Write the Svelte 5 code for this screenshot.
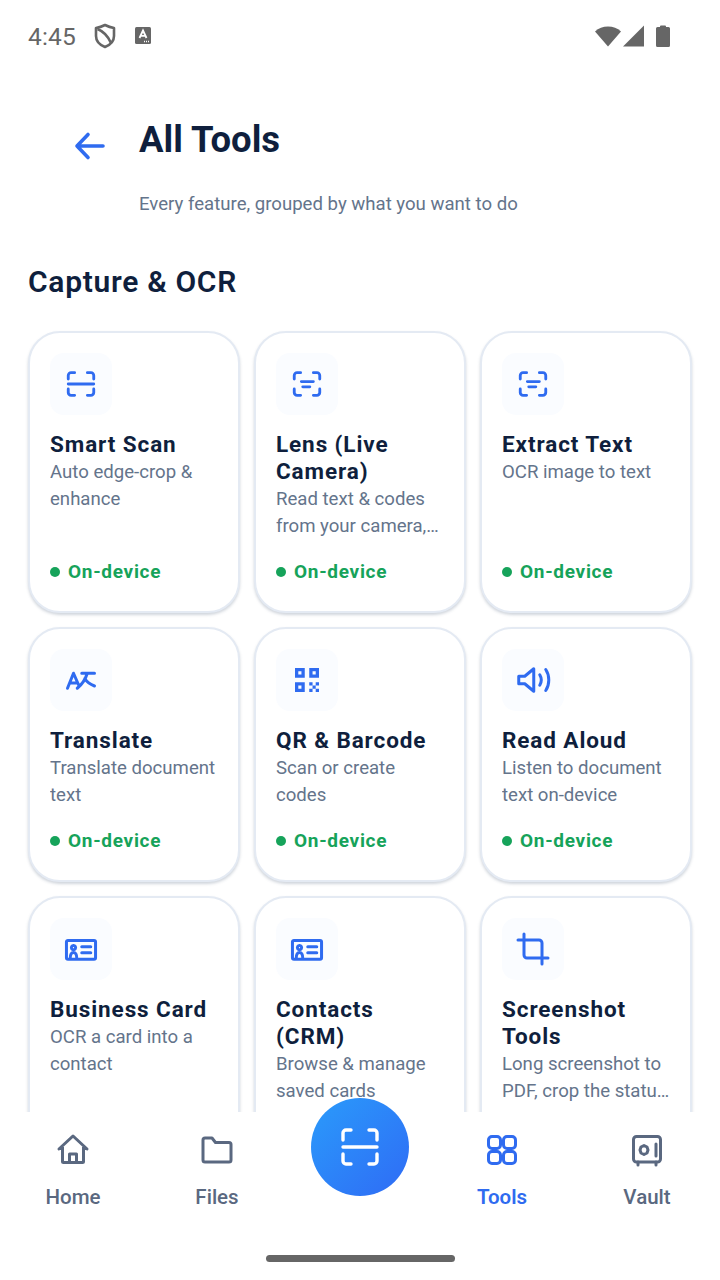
<script>
  const scanCorners = 'M3 8.500V6a2 2 0 0 1 2-2h2.500M16.500 4H19a2 2 0 0 1 2 2v2.500M21 15.500V18a2 2 0 0 1-2 2h-2.500M7.500 20H5a2 2 0 0 1-2-2v-2.500';

  const icons = {
    scan: scanCorners + 'M3 12h18',
    lens: scanCorners + 'M8 10.300h8.500M9 14h5',
    translate: 'M3 17.500 7 7.500l3.500 8M4.700 14h5M12.500 7.500H21M16 8c-1 3.500-3.500 7-6.500 9.500M14.500 11c1.500 2.500 3.800 4 6.500 5',
    card: 'M3.300 6.300h17.400a1 1 0 0 1 1 1v10.500a1 1 0 0 1-1 1H3.300a1 1 0 0 1-1-1V7.300a1 1 0 0 1 1-1zM12.500 10.500h6M12.500 14.500h6M4.800 18.500c0-5.500 4.400-5.500 4.400 0M7 9.700a1.400 1.400 0 1 0 .01 0',
    crop: 'M6 2v14a2 2 0 0 0 2 2h14M2 6h14a2 2 0 0 1 2 2v14'
  };

  const tools = [
    { name: 'Smart Scan', desc: 'Auto edge-crop & enhance', icon: 'scan' },
    { name: 'Lens (Live Camera)', desc: 'Read text & codes from your camera, instantly', icon: 'lens' },
    { name: 'Extract Text', desc: 'OCR image to text', icon: 'lens' },
    { name: 'Translate', desc: 'Translate document text', icon: 'translate' },
    { name: 'QR & Barcode', desc: 'Scan or create codes', icon: 'qr' },
    { name: 'Read Aloud', desc: 'Listen to document text on-device', icon: 'speaker' },
    { name: 'Business Card', desc: 'OCR a card into a contact', icon: 'card' },
    { name: 'Contacts (CRM)', desc: 'Browse & manage saved cards', icon: 'card' },
    { name: 'Screenshot Tools', desc: 'Long screenshot to PDF, crop the status bar', icon: 'crop' }
  ];

  const iconSize = (icon) => (icon === 'scan' || icon === 'lens' ? 34 : 36);
</script>

<div class="screen">
  <div class="status">
    <span class="time">4:45</span>
    <svg class="st-shield" width="24" height="26" viewBox="0 0 24 26" fill="none" stroke="#666" stroke-width="2.600" stroke-linejoin="round">
      <path d="M12 2c3 1.500 6 2.500 9 3v8c0 5-4 9-9 11-5-2-9-6-9-11V5c3-.5 6-1.500 9-3z" />
      <path d="M4.500 6c5 2 10.500 7 13.500 14" />
    </svg>
    <svg class="st-a" width="16" height="18" viewBox="0 0 16 18">
      <rect width="16" height="17" rx="1.500" fill="#666" />
      <path d="M4.500 11 8 3.500l3.500 7.500M5.800 8.800h4.400" fill="none" stroke="#fff" stroke-width="1.800" />
      <path d="M9 14.500h5" stroke="#fff" stroke-width="1.500" stroke-dasharray="1 1" />
    </svg>
    <span class="spacer"></span>
    <svg width="26" height="22" viewBox="0 0 26 22"><path d="M0 6.500C3.500 3 8 1.500 13 1.500S22.500 3 26 6.500L13 21.500z" fill="#666" /></svg>
    <svg class="st-signal" width="21" height="22" viewBox="0 0 21 22"><path d="M21 0.500V21.500H0z" fill="#666" /></svg>
    <svg class="st-batt" width="14" height="22" viewBox="0 0 14 22"><path d="M4 1.500a1 1 0 0 1 1-1h4a1 1 0 0 1 1 1V2h2.500a1.500 1.500 0 0 1 1.500 1.500v17a1.500 1.500 0 0 1-1.500 1.500h-11A1.500 1.500 0 0 1 0 20.500v-17A1.500 1.500 0 0 1 1.500 2H4z" fill="#666" /></svg>
  </div>

  <div class="content">
    <header class="head">
      <svg class="back" width="32" height="32" viewBox="0 0 32 32" fill="none" stroke="#2f6bf0" stroke-width="3.600" stroke-linecap="round" stroke-linejoin="round">
        <path d="M29 16H3M14 4.500 3 16l11 11.500" />
      </svg>
      <div>
        <h1>All Tools</h1>
        <p>Every feature, grouped by what you want to do</p>
      </div>
    </header>

    <h2>Capture &amp; OCR</h2>

    <div class="grid">
      {#each tools as tool}
        <div class="card">
          <div class="tile">
            {#if tool.icon === 'qr'}
              <svg width="36" height="36" viewBox="0 0 24 24" fill="#2f6bf0">
                <path fill-rule="evenodd" d="M4 4h6.500v6.500H4zM6.200 6.200v2.100h2.100V6.200zM13.500 4H20v6.500h-6.500zM15.700 6.200v2.100h2.100V6.200zM4 13.500h6.500V20H4zM6.200 15.700v2.100h2.100v-2.100z" />
                <path d="M13.500 13.500h2.200v2.200h-2.200zM17.800 13.500H20v2.200h-2.200zM15.700 15.700h2.100v2.100h-2.100zM13.500 17.800h2.200V20h-2.200zM17.800 17.800H20V20h-2.200z" />
              </svg>
            {:else if tool.icon === 'speaker'}
              <svg width="36" height="36" viewBox="0 0 24 24" fill="none" stroke="#2f6bf0" stroke-width="2" stroke-linecap="round" stroke-linejoin="round">
                <path d="M2.500 9.500v5h4l6 5V4.500l-6 5z" />
                <path d="M16.500 8.500c1.300 2.200 1.300 4.800 0 7M20.500 5c2.700 4 2.700 10 0 14" />
              </svg>
            {:else}
              <svg width={iconSize(tool.icon)} height={iconSize(tool.icon)} viewBox="0 0 24 24" fill="none" stroke="#2f6bf0" stroke-width="2" stroke-linecap="round" stroke-linejoin="round">
                <path d={icons[tool.icon]} />
              </svg>
            {/if}
          </div>
          <div class="name">{tool.name}</div>
          <div class="desc">{tool.desc}</div>
          <div class="badge"><span class="dot"></span>On-device</div>
        </div>
      {/each}
    </div>
  </div>

  <nav class="nav">
    <div class="item">
      <svg width="34" height="34" viewBox="0 0 34 34" fill="none" stroke="#5a6880" stroke-width="3" stroke-linecap="round" stroke-linejoin="round">
        <path d="M3 16 17 3l14 13M6.500 14v14.500a1 1 0 0 0 1 1h19a1 1 0 0 0 1-1V14M13.500 29.500V21h7v8.500" />
      </svg>
      <span>Home</span>
    </div>
    <div class="item">
      <svg width="34" height="34" viewBox="0 0 34 34" fill="none" stroke="#5a6880" stroke-width="3" stroke-linecap="round" stroke-linejoin="round">
        <path d="M3 7a2 2 0 0 1 2-2h7l3.500 4.500H29a2 2 0 0 1 2 2V27a2 2 0 0 1-2 2H5a2 2 0 0 1-2-2z" />
      </svg>
      <span>Files</span>
    </div>
    <div class="item"></div>
    <div class="item active">
      <svg width="34" height="34" viewBox="0 0 34 34" fill="none" stroke="#2f6bf0" stroke-width="3">
        <rect x="3.500" y="3.500" width="12" height="12" rx="3.500" />
        <rect x="18.500" y="3.500" width="12" height="12" rx="3.500" />
        <rect x="3.500" y="18.500" width="12" height="12" rx="3.500" />
        <rect x="18.500" y="18.500" width="12" height="12" rx="3.500" />
      </svg>
      <span>Tools</span>
    </div>
    <div class="item">
      <svg width="34" height="34" viewBox="0 0 34 34" fill="none" stroke="#5a6880" stroke-width="3" stroke-linecap="round" stroke-linejoin="round">
        <rect x="3.500" y="3.500" width="27" height="25.500" rx="3" />
        <path d="M8 29v3M26 29v3M26 11v12" />
        <path d="M14 12.500 17 14l1 3-1 3-3 1.500-3-1.500-1-3 1-3z" />
      </svg>
      <span>Vault</span>
    </div>

    <button class="fab" aria-label="Scan">
      <svg width="50" height="50" viewBox="0 0 50 50" fill="none" stroke="#fff" stroke-width="3.400" stroke-linecap="round" stroke-linejoin="round">
        <path d="M16 8h-5a3 3 0 0 0-3 3v7M34 8h5a3 3 0 0 1 3 3v7M42 32v7a3 3 0 0 1-3 3h-5M16 42h-5a3 3 0 0 1-3-3v-7M8 25h34" />
      </svg>
    </button>

    <div class="home-bar"></div>
  </nav>
</div>

<style>
  :global(body) {
    margin: 0;
    background: #fff;
  }

  .screen {
    height: 1280px;
    display: flex;
    flex-direction: column;
    overflow: hidden;
    background: #fff;
    font-family: Roboto, sans-serif;
  }

  .status {
    height: 72px;
    flex: none;
    display: flex;
    align-items: center;
    padding: 0 28px;
    box-sizing: border-box;
  }

  .time {
    font-size: 24.500px;
    color: #666;
    letter-spacing: 0.2px;
  }

  .st-shield {
    margin-left: 17px;
  }

  .st-a {
    margin-left: 18px;
  }

  .spacer {
    flex: 1;
  }

  .st-signal {
    margin-left: 2px;
  }

  .st-batt {
    margin-left: 12px;
    margin-right: 22px;
  }

  .content {
    flex: 1;
    min-height: 0;
    overflow: hidden;
    padding: 0 28px;
  }

  .head {
    display: flex;
    padding: 47px 0 0 46px;
  }

  .back {
    margin-top: 11px;
    margin-right: 33px;
  }

  h1 {
    margin: 0;
    font-size: 36.500px;
    line-height: 42px;
    font-weight: 700;
    color: #0f1f3d;
  }

  .head p {
    margin: 31px 0 0;
    font-size: 18.600px;
    line-height: 24px;
    color: #64748b;
  }

  h2 {
    margin: 48px 0 0;
    font-size: 30px;
    line-height: 36px;
    font-weight: 600;
    letter-spacing: 0.7px;
    color: #0f1f3d;
  }

  .grid {
    display: grid;
    grid-template-columns: repeat(3, 212px);
    gap: 14.500px 14px;
    margin-top: 31px;
  }

  .card {
    display: flex;
    flex-direction: column;
    box-sizing: border-box;
    padding: 20px 20px 27px;
    background: #fff;
    border: 2px solid #e4eaf3;
    border-radius: 32px;
    box-shadow: 0 2px 3px rgba(100, 116, 139, 0.3);
  }

  .tile {
    width: 62px;
    height: 62px;
    display: flex;
    align-items: center;
    justify-content: center;
    background: #fafcff;
    border-radius: 14px;
  }

  .name {
    margin-top: 15.500px;
    font-size: 22.500px;
    line-height: 27px;
    font-weight: 700;
    letter-spacing: 0.9px;
    color: #0f1f3d;
  }

  .desc {
    margin-top: 1px;
    font-size: 18.600px;
    line-height: 27px;
    color: #64748b;
    display: -webkit-box;
    -webkit-box-orient: vertical;
    -webkit-line-clamp: 2;
    line-clamp: 2;
    overflow: hidden;
  }

  .badge {
    margin-top: auto;
    padding-top: 20px;
    display: flex;
    align-items: center;
    font-size: 19px;
    line-height: 24px;
    font-weight: 700;
    letter-spacing: 0.7px;
    color: #16a35a;
  }

  .dot {
    width: 10px;
    height: 10px;
    margin-right: 8px;
    border-radius: 50%;
    background: #16a35a;
  }

  .nav {
    position: relative;
    height: 168px;
    flex: none;
    display: grid;
    grid-template-columns: 146px 142px 142px 144px 146px;
    background: #fff;
  }

  .item {
    display: flex;
    flex-direction: column;
    align-items: center;
    padding-top: 21px;
    font-size: 20.500px;
    line-height: 26px;
    font-weight: 500;
    color: #5a6880;
  }

  .item span {
    margin-top: 17px;
  }

  .item.active {
    color: #2f6bf0;
    font-weight: 600;
  }

  .fab {
    position: absolute;
    left: 311px;
    top: -14px;
    width: 98px;
    height: 98px;
    padding: 0;
    border: none;
    border-radius: 50%;
    display: flex;
    align-items: center;
    justify-content: center;
    background: linear-gradient(135deg, #2a9bfb, #2f6bf5);
  }

  .home-bar {
    position: absolute;
    left: 266px;
    top: 143px;
    width: 189px;
    height: 7px;
    border-radius: 4px;
    background: #666;
  }
</style>
